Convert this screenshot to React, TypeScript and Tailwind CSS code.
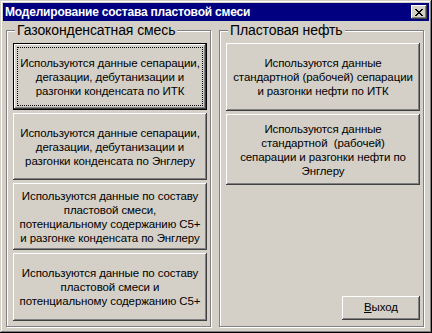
import React from "react";

const raised =
  "shadow-[inset_-1px_-1px_#404040,inset_1px_1px_#ffffff,inset_-2px_-2px_#808080,inset_2px_2px_#d4d0c8]";

function Btn({
  lines,
  h,
  active = false,
}: {
  lines: string[];
  h: string;
  active?: boolean;
}) {
  if (active) {
    return (
      <div className={`border border-black ${h}`}>
        <div
          className={`flex h-full items-center justify-center p-[3px] ${raised}`}
        >
          <div className="flex h-full w-full flex-col items-center justify-center border border-dotted border-black leading-[14px]">
            {lines.map((l, i) => (
              <span key={i} className="whitespace-pre">
                {l}
              </span>
            ))}
          </div>
        </div>
      </div>
    );
  }
  return (
    <div
      className={`flex flex-col items-center justify-center leading-[14px] ${h} ${raised}`}
    >
      {lines.map((l, i) => (
        <span key={i} className="whitespace-pre">
          {l}
        </span>
      ))}
    </div>
  );
}

function Group({
  title,
  children,
}: {
  title: string;
  children: React.ReactNode;
}) {
  return (
    <div className="relative h-[297px] w-[205px] border border-[#808080] shadow-[inset_1px_1px_#ffffff,1px_1px_#ffffff]">
      <span className="absolute left-[8px] top-[-9px] bg-[#d4d0c8] px-[2px] text-[14px] leading-[16px]">
        {title}
      </span>
      {children}
    </div>
  );
}

export default function App() {
  return (
    <div
      className="h-[333px] w-[432px] bg-[#d4d0c8] p-[3px] text-black shadow-[inset_-1px_-1px_#000000,inset_1px_1px_#d4d0c8,inset_-2px_-2px_#808080,inset_2px_2px_#ffffff]"
      style={{ fontFamily: '"Liberation Sans", Arial, sans-serif' }}
    >
      {/* title bar */}
      <div className="flex h-[18px] items-center justify-between bg-[#000080] pl-[2px] pr-[2px]">
        <span className="text-[12px] font-bold leading-none tracking-[-0.2px] text-white">
          Моделирование состава пластовой смеси
        </span>
        <div
          className={`flex h-[14px] w-[16px] items-center justify-center bg-[#d4d0c8] ${raised}`}
        >
          <svg width="8" height="7" viewBox="0 0 8 7">
            <path
              d="M0 0h2v1h1v1h2v-1h1v-1h2v1h-1v1h-1v1h-1v1h1v1h1v1h1v1h-2v-1h-1v-1h-2v1h-1v1h-2v-1h1v-1h1v-1h1v-1h-1v-1h-1v-1h-1z"
              fill="#000"
            />
          </svg>
        </div>
      </div>

      {/* content */}
      <div className="mt-[9px] flex gap-[8px] pl-[3px] text-[11.5px] tracking-[-0.1px]">
        <Group title="Газоконденсатная смесь">
          <div className="flex flex-col gap-[3px] pl-[6px] pr-[3px] pt-[12px]">
            <Btn
              active
              h="h-[67px]"
              lines={[
                "Используются данные сепарации,",
                "дегазации, дебутанизации и",
                "разгонки конденсата по ИТК",
              ]}
            />
            <Btn
              h="h-[67px]"
              lines={[
                "Используются данные сепарации,",
                "дегазации, дебутанизации и",
                "разгонки конденсата по Энглеру",
              ]}
            />
            <Btn
              h="h-[67px]"
              lines={[
                "Используются данные по составу",
                "пластовой смеси,",
                "потенциальному содержанию С5+",
                "и разгонке конденсата по Энглеру",
              ]}
            />
            <Btn
              h="h-[68px]"
              lines={[
                "Используются данные по составу",
                "пластовой смеси и",
                "потенциальному содержанию С5+",
              ]}
            />
          </div>
        </Group>
        <Group title="Пластовая нефть">
          <div className="flex h-full flex-col pb-[6px] pl-[6px] pr-[3px] pt-[12px]">
            <div className="flex flex-col gap-[3px]">
              <Btn
                h="h-[68px]"
                lines={[
                  "Используются данные",
                  "стандартной (рабочей) сепарации",
                  "и разгонки нефти по ИТК",
                ]}
              />
              <Btn
                h="h-[71px]"
                lines={[
                  "Используются данные",
                  "стандартной  (рабочей)",
                  "сепарации и разгонки нефти по",
                  "Энглеру",
                ]}
              />
            </div>
            <div className="mt-auto flex justify-end">
              <div
                className={`flex h-[24px] w-[78px] items-center justify-center ${raised}`}
              >
                <span>
                  <span className="underline">В</span>ыход
                </span>
              </div>
            </div>
          </div>
        </Group>
      </div>
    </div>
  );
}
